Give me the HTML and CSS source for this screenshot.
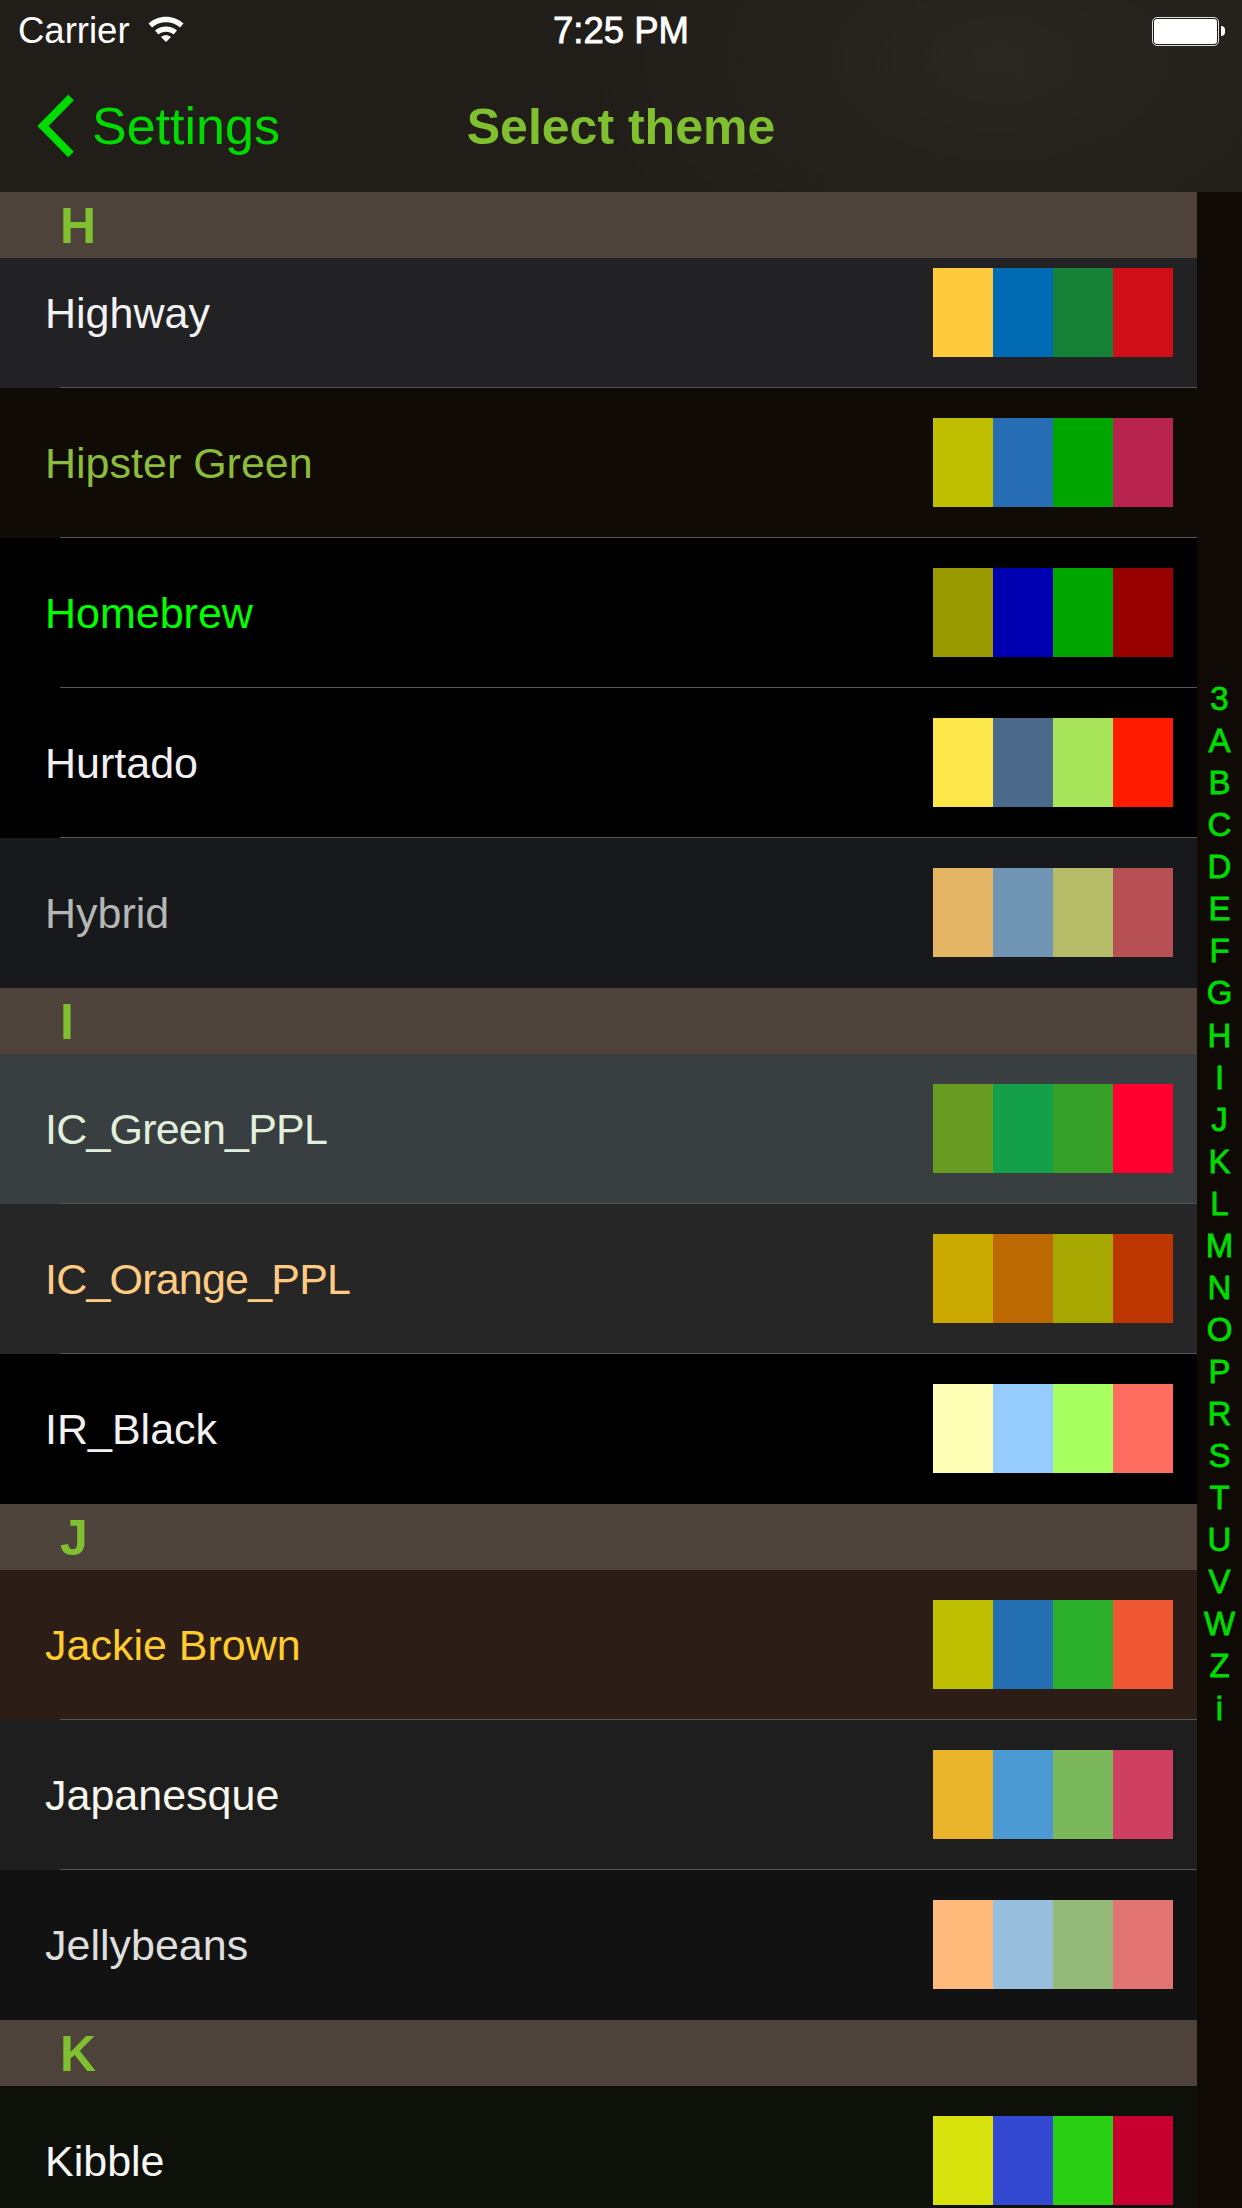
FILE: index.html
```html
<!DOCTYPE html>
<html lang="en">
<head>
    <meta charset="UTF-8">
    <meta name="viewport" content="width=device-width, initial-scale=1.0">
    <title>Select theme</title>
    <link rel="stylesheet" href="styles.css">
</head>
<body>
    <header class="top">
        <div class="status">
            <div class="status-left">
                <span>Carrier</span>
                <svg class="wifi" viewBox="0 0 38 28" width="38" height="28">
                    <path d="M1.5 9.5C11 0.5 27 0.5 36.5 9.5L33 13.5C25.5 6.5 12.5 6.5 5 13.5Z" fill="#fff"/>
                    <path d="M8 16.5C14 11 24 11 30 16.5L26.5 20.5C22.5 16.8 15.5 16.8 11.500 20.5Z" fill="#fff"/>
                    <path d="M14 23C17 20.500 21 20.500 24 23L19 28Z" fill="#fff"/>
                </svg>
            </div>
            <span class="time">7:25 PM</span>
            <div class="battery"><div class="battery-body"></div><div class="battery-nub"></div></div>
        </div>
        <nav class="nav">
            <div class="back">
                <svg class="chevron" viewBox="0 0 40 64" width="40" height="64">
                    <path d="M35 3.500L7 32L35 60.500" fill="none" stroke="#00dc00" stroke-width="8"/>
                </svg>
                <span>Settings</span>
            </div>
            <h1 class="title">Select theme</h1>
        </nav>
    </header>

    <div class="content">
        <main class="list">
            <div class="section">H</div>
            <div class="row row-scrolled" style="background:#222225;color:#f2f2f2">
                <span class="name">Highway</span>
                <div class="swatches"><i style="background:#ffca3b"></i><i style="background:#006bb3"></i><i style="background:#158136"></i><i style="background:#d00e18"></i></div>
            </div>
            <div class="row" style="background:#100b05;color:#8dbb3b">
                <span class="name">Hipster Green</span>
                <div class="swatches"><i style="background:#bfbf00"></i><i style="background:#266db3"></i><i style="background:#00a600"></i><i style="background:#b7224e"></i></div>
            </div>
            <div class="row" style="background:#000;color:#00ff00">
                <span class="name">Homebrew</span>
                <div class="swatches"><i style="background:#999900"></i><i style="background:#0000b2"></i><i style="background:#00a600"></i><i style="background:#990000"></i></div>
            </div>
            <div class="row" style="background:#000;color:#f0f0f0">
                <span class="name">Hurtado</span>
                <div class="swatches"><i style="background:#fbe74a"></i><i style="background:#4b6a8b"></i><i style="background:#a8e45a"></i><i style="background:#ff1b00"></i></div>
            </div>
            <div class="row row-last" style="background:#17191c;color:#b4b7b4">
                <span class="name">Hybrid</span>
                <div class="swatches"><i style="background:#e5b566"></i><i style="background:#7195b4"></i><i style="background:#b5bd68"></i><i style="background:#b65055"></i></div>
            </div>

            <div class="section">I</div>
            <div class="row" style="background:#393e41;color:#e0f0dc">
                <span class="name name-tight">IC_Green_PPL</span>
                <div class="swatches"><i style="background:#679b22"></i><i style="background:#14a048"></i><i style="background:#359f28"></i><i style="background:#ff0030"></i></div>
            </div>
            <div class="row" style="background:#262626;color:#ffcb83">
                <span class="name name-tight">IC_Orange_PPL</span>
                <div class="swatches"><i style="background:#cbaa00"></i><i style="background:#bb6900"></i><i style="background:#a6a700"></i><i style="background:#bd3500"></i></div>
            </div>
            <div class="row row-last" style="background:#000;color:#f1f1f1">
                <span class="name">IR_Black</span>
                <div class="swatches"><i style="background:#ffffb6"></i><i style="background:#96cbfe"></i><i style="background:#a8ff60"></i><i style="background:#ff6c60"></i></div>
            </div>

            <div class="section">J</div>
            <div class="row" style="background:#2c1d16;color:#ffcc2f">
                <span class="name">Jackie Brown</span>
                <div class="swatches"><i style="background:#bebf00"></i><i style="background:#246eb2"></i><i style="background:#2baf2b"></i><i style="background:#ef5734"></i></div>
            </div>
            <div class="row" style="background:#1e1e1e;color:#f7f6ec">
                <span class="name">Japanesque</span>
                <div class="swatches"><i style="background:#e9b32a"></i><i style="background:#4c9ad4"></i><i style="background:#7bb75b"></i><i style="background:#cf3f61"></i></div>
            </div>
            <div class="row row-last" style="background:#121212;color:#dedede">
                <span class="name">Jellybeans</span>
                <div class="swatches"><i style="background:#ffba7b"></i><i style="background:#97bedc"></i><i style="background:#94b979"></i><i style="background:#e27373"></i></div>
            </div>

            <div class="section">K</div>
            <div class="row" style="background:#0e100a;color:#f7f7f7">
                <span class="name">Kibble</span>
                <div class="swatches"><i style="background:#d8e30e"></i><i style="background:#3449d1"></i><i style="background:#29cf13"></i><i style="background:#c70031"></i></div>
            </div>
        </main>

        <aside class="index">
            <span>3</span><span>A</span><span>B</span><span>C</span><span>D</span>
            <span>E</span><span>F</span><span>G</span><span>H</span><span>I</span>
            <span>J</span><span>K</span><span>L</span><span>M</span><span>N</span>
            <span>O</span><span>P</span><span>R</span><span>S</span><span>T</span>
            <span>U</span><span>V</span><span>W</span><span>Z</span><span>i</span>
        </aside>
    </div>
</body>
</html>
```

FILE: styles.css
```css
html, body {
    margin: 0;
    height: 2208px;
    overflow: hidden;
    background: #0f0a05;
}
body {
    font-family: "Liberation Sans", Arial, sans-serif;
    display: flex;
    flex-direction: column;
}

.top {
    height: 192px;
    flex-shrink: 0;
    background: radial-gradient(ellipse 420px 260px at 1000px 60px, #2a2722, #211e1a);
}
.status {
    height: 62px;
    display: flex;
    align-items: center;
    justify-content: space-between;
    position: relative;
    color: #fff;
    font-size: 36.5px;
    padding: 0 17px 0 18px;
}
.status-left {
    display: flex;
    align-items: center;
    gap: 17px;
}
.wifi {
    margin-top: -6px;
}
.time {
    position: absolute;
    left: 0;
    right: 0;
    text-align: center;
    -webkit-text-stroke: 0.8px #fff;
}
.battery {
    display: flex;
    align-items: center;
    gap: 2px;
}
.battery-body {
    width: 63px;
    height: 25px;
    background: #fff;
    border: 2px solid #211e1a;
    outline: 1px solid #ddd;
    outline-offset: -1px;
    border-radius: 5px;
}
.battery-nub {
    width: 4px;
    height: 10px;
    background: #fff;
    border-radius: 0 5px 5px 0;
}

.nav {
    height: 130px;
    display: flex;
    align-items: center;
    justify-content: center;
    position: relative;
}
.back {
    position: absolute;
    left: 36px;
    top: 32px;
    display: flex;
    align-items: center;
    gap: 16px;
    color: #00dc00;
    font-size: 52px;
}
.title {
    margin: 0;
    color: #80c030;
    font-size: 50px;
    font-weight: bold;
}

.content {
    flex: 1;
    display: flex;
    min-height: 0;
}
.list {
    width: 1197px;
    overflow: hidden;
}
.section {
    height: 66px;
    box-sizing: border-box;
    padding: 3px 0 0 60px;
    line-height: 63px;
    background: #4d433b;
    color: #80c030;
    font-size: 50px;
    font-weight: bold;
}
.row {
    height: 150px;
    box-sizing: border-box;
    padding: 0 24px 0 45px;
    display: flex;
    align-items: center;
    justify-content: space-between;
    position: relative;
    font-size: 43px;
}
.row::after {
    content: "";
    position: absolute;
    left: 60px;
    right: 0;
    bottom: 0;
    height: 1px;
    background: #555;
}
.row-last::after {
    display: none;
}
.row-scrolled {
    height: 130px;
    padding-bottom: 20px;
}
.name-tight {
    letter-spacing: -0.8px;
}
.swatches {
    display: flex;
    margin-bottom: 1px;
}
.swatches i {
    display: block;
    width: 60px;
    height: 89px;
}

.index {
    flex: 1;
    display: flex;
    flex-direction: column;
    align-items: center;
    padding-top: 486px;
    color: #00dc00;
    font-size: 33px;
    -webkit-text-stroke: 0.8px #00dc00;
}
.index span {
    height: 42.07px;
    line-height: 42px;
}
```
